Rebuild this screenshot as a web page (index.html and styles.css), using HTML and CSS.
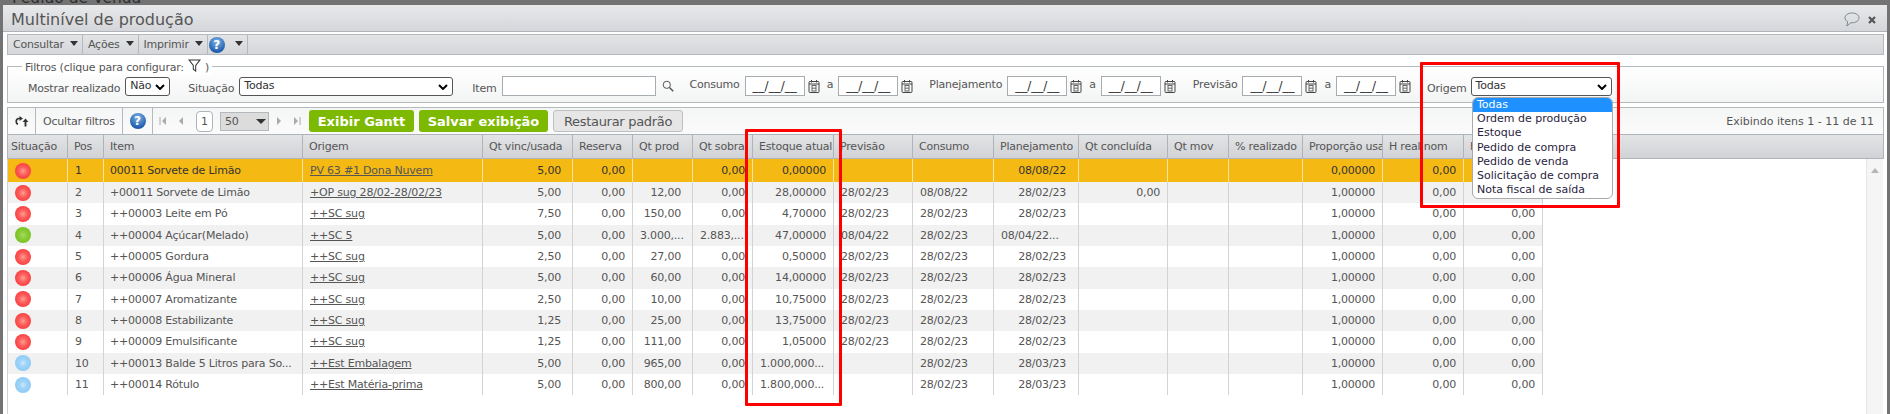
FILE: index.html
```html
<!DOCTYPE html>
<html lang="pt-BR">
<head>
<meta charset="utf-8">
<title>Multinível de produção</title>
<link rel="stylesheet" href="styles.css">
</head>
<body>
<div class="backdrop-title">Pedido de Venda</div>
<main class="window">
  <header class="titlebar">
    <h1 class="title">Multinível de produção</h1>
    <div class="title-icons">
      <svg class="ico-chat" viewBox="0 0 16 15"><path d="M8 1C4 1 1 3 1 5.800c0 1.700 1 3 2.700 3.800L2.800 14l4-3.200H8c4 0 7-2.200 7-5S12 1 8 1z" fill="none" stroke="#7d8a90" stroke-width="1"/></svg>
      <svg class="ico-x" viewBox="0 0 8 8"><path d="M1 1l6 6M7 1L1 7" stroke="#555" stroke-width="2.200" fill="none"/></svg>
    </div>
  </header>
  <nav class="menubar">
    <div class="menu-item">Consultar<i class="caret"></i></div>
    <div class="menu-item">Ações<i class="caret"></i></div>
    <div class="menu-item">Imprimir<i class="caret"></i></div>
    <div class="menu-item menu-help"><span class="help">?</span><i class="caret"></i></div>
  </nav>
  <section class="filters">
    <div class="filters-legend">Filtros (clique para configurar:
      <svg class="ico-funnel" viewBox="0 0 14 14"><path d="M1 1h12L8.300 7v6L5.700 11V7z" fill="#fff" stroke="#333" stroke-width="1.100"/></svg>)
    </div>
    <div class="filter-row">
      <label class="lb low lb-real">Mostrar realizado</label>
      <div class="sel sel-nao">Não<svg class="chev" viewBox="0 0 10 6"><path d="M1 1l4 4 4-4" fill="none" stroke="#000" stroke-width="2"/></svg></div>
      <label class="lb low lb-sit">Situação</label>
      <div class="sel sel-sit">Todas<svg class="chev" viewBox="0 0 10 6"><path d="M1 1l4 4 4-4" fill="none" stroke="#000" stroke-width="2"/></svg></div>
      <label class="lb low lb-item">Item</label>
      <div class="inp inp-item"></div>
      <svg class="ico-search" viewBox="0 0 12 12"><circle cx="4.800" cy="4.800" r="3.600" fill="none" stroke="#555" stroke-width="1"/><path d="M7.500 7.500l3.700 3.700" stroke="#555" stroke-width="1.500"/></svg>
      <label class="lb up lb-cons">Consumo</label>
      <div class="inp date">__/__/__</div>
      <svg class="ico-cal" viewBox="0 0 12 14"><use href="#cal"/></svg>
      <span class="lb up a">a</span>
      <div class="inp date">__/__/__</div>
      <svg class="ico-cal" viewBox="0 0 12 14"><use href="#cal"/></svg>
      <label class="lb up lb-plan">Planejamento</label>
      <div class="inp date">__/__/__</div>
      <svg class="ico-cal" viewBox="0 0 12 14"><use href="#cal"/></svg>
      <span class="lb up a">a</span>
      <div class="inp date">__/__/__</div>
      <svg class="ico-cal" viewBox="0 0 12 14"><use href="#cal"/></svg>
      <label class="lb up lb-prev">Previsão</label>
      <div class="inp date">__/__/__</div>
      <svg class="ico-cal" viewBox="0 0 12 14"><use href="#cal"/></svg>
      <span class="lb up a">a</span>
      <div class="inp date">__/__/__</div>
      <svg class="ico-cal" viewBox="0 0 12 14"><use href="#cal"/></svg>
      <label class="lb low lb-orig">Origem</label>
      <div class="sel sel-orig">Todas<svg class="chev" viewBox="0 0 10 6"><path d="M1 1l4 4 4-4" fill="none" stroke="#000" stroke-width="2"/></svg></div>
    </div>
  </section>
  <div class="toolbar">
    <div class="tb-cell tb-refresh"><svg class="ico-refresh" viewBox="0 0 14 11"><path d="M6 2.500H4C2.300 2.500 1.200 3.800 1.200 5.500S2 8 3 8.300" fill="none" stroke="#333" stroke-width="1.700"/><path d="M4.500 0L8 2.500 4.500 5z" fill="#333"/><path d="M10.500 10.500V4.500" stroke="#333" stroke-width="1.900"/><path d="M7.500 6l3-3.500 3 3.500z" fill="#333"/></svg></div>
    <div class="tb-cell tb-hide">Ocultar filtros</div>
    <div class="tb-cell tb-help"><span class="help">?</span></div>
    <div class="pager">
      <svg class="pg" viewBox="0 0 8 10"><path d="M1 1v8" stroke="#aaa"/><path d="M7 1L3 5l4 4z" fill="#aaa"/></svg>
      <svg class="pg pg-gap" viewBox="0 0 8 10"><path d="M6 1L2 5l4 4z" fill="#aaa"/></svg>
      <div class="page-num">1</div>
      <div class="page-size">50<i class="caret dark"></i></div>
      <svg class="pg" viewBox="0 0 8 10"><path d="M2 1l4 4-4 4z" fill="#aaa"/></svg>
      <svg class="pg pg-gap" viewBox="0 0 8 10"><path d="M1 1l4 4-4 4z" fill="#aaa"/><path d="M7 1v8" stroke="#aaa"/></svg>
    </div>
    <button class="btn green b-gantt">Exibir Gantt</button>
    <button class="btn green b-save">Salvar exibição</button>
    <button class="btn gray b-rest">Restaurar padrão</button>
    <div class="count">Exibindo itens 1 - 11 de 11</div>
  </div>
  <section class="grid-wrap">
    <div class="grid head">
      <div>Situação</div><div>Pos</div><div>Item</div><div>Origem</div><div>Qt vinc/usada</div><div>Reserva</div><div>Qt prod</div><div>Qt sobra</div><div>Estoque atual</div><div>Previsão</div><div>Consumo</div><div>Planejamento</div><div>Qt concluída</div><div>Qt mov</div><div>% realizado</div><div>Proporção usada</div><div>H real nom</div><div>H real</div><div class="head-fill"></div>
    </div>
    <div class="grid-body">
      <div class="grid row sel-row"><div><span class="dot dot-r"></span></div><div>1</div><div>00011 Sorvete de Limão</div><div><a class="link">PV 63 #1 Dona Nuvem</a></div><div class="r">5,00</div><div class="r">0,00</div><div class="r"></div><div class="r">0,00</div><div class="r">0,00000</div><div></div><div></div><div class="r">08/08/22</div><div class="r"></div><div></div><div></div><div class="r">0,00000</div><div class="r">0,00</div><div class="r">0,00</div></div>
      <div class="grid row odd"><div><span class="dot dot-r"></span></div><div>2</div><div>+00011 Sorvete de Limão</div><div><a class="link">+OP sug 28/02-28/02/23</a></div><div class="r">5,00</div><div class="r">0,00</div><div class="r">12,00</div><div class="r">0,00</div><div class="r">28,00000</div><div>28/02/23</div><div>08/08/22</div><div class="r">28/02/23</div><div class="r">0,00</div><div></div><div></div><div class="r">1,00000</div><div class="r">0,00</div><div class="r">0,00</div></div>
      <div class="grid row"><div><span class="dot dot-r"></span></div><div>3</div><div>++00003 Leite em Pó</div><div><a class="link">++SC sug</a></div><div class="r">7,50</div><div class="r">0,00</div><div class="r">150,00</div><div class="r">0,00</div><div class="r">4,70000</div><div>28/02/23</div><div>28/02/23</div><div class="r">28/02/23</div><div class="r"></div><div></div><div></div><div class="r">1,00000</div><div class="r">0,00</div><div class="r">0,00</div></div>
      <div class="grid row odd"><div><span class="dot dot-g"></span></div><div>4</div><div>++00004 Açúcar(Melado)</div><div><a class="link">++SC 5</a></div><div class="r">5,00</div><div class="r">0,00</div><div>3.000,...</div><div>2.883,...</div><div class="r">47,00000</div><div>08/04/22</div><div>28/02/23</div><div>08/04/22...</div><div class="r"></div><div></div><div></div><div class="r">1,00000</div><div class="r">0,00</div><div class="r">0,00</div></div>
      <div class="grid row"><div><span class="dot dot-r"></span></div><div>5</div><div>++00005 Gordura</div><div><a class="link">++SC sug</a></div><div class="r">2,50</div><div class="r">0,00</div><div class="r">27,00</div><div class="r">0,00</div><div class="r">0,50000</div><div>28/02/23</div><div>28/02/23</div><div class="r">28/02/23</div><div class="r"></div><div></div><div></div><div class="r">1,00000</div><div class="r">0,00</div><div class="r">0,00</div></div>
      <div class="grid row odd"><div><span class="dot dot-r"></span></div><div>6</div><div>++00006 Água Mineral</div><div><a class="link">++SC sug</a></div><div class="r">5,00</div><div class="r">0,00</div><div class="r">60,00</div><div class="r">0,00</div><div class="r">14,00000</div><div>28/02/23</div><div>28/02/23</div><div class="r">28/02/23</div><div class="r"></div><div></div><div></div><div class="r">1,00000</div><div class="r">0,00</div><div class="r">0,00</div></div>
      <div class="grid row"><div><span class="dot dot-r"></span></div><div>7</div><div>++00007 Aromatizante</div><div><a class="link">++SC sug</a></div><div class="r">2,50</div><div class="r">0,00</div><div class="r">10,00</div><div class="r">0,00</div><div class="r">10,75000</div><div>28/02/23</div><div>28/02/23</div><div class="r">28/02/23</div><div class="r"></div><div></div><div></div><div class="r">1,00000</div><div class="r">0,00</div><div class="r">0,00</div></div>
      <div class="grid row odd"><div><span class="dot dot-r"></span></div><div>8</div><div>++00008 Estabilizante</div><div><a class="link">++SC sug</a></div><div class="r">1,25</div><div class="r">0,00</div><div class="r">25,00</div><div class="r">0,00</div><div class="r">13,75000</div><div>28/02/23</div><div>28/02/23</div><div class="r">28/02/23</div><div class="r"></div><div></div><div></div><div class="r">1,00000</div><div class="r">0,00</div><div class="r">0,00</div></div>
      <div class="grid row"><div><span class="dot dot-r"></span></div><div>9</div><div>++00009 Emulsificante</div><div><a class="link">++SC sug</a></div><div class="r">1,25</div><div class="r">0,00</div><div class="r">111,00</div><div class="r">0,00</div><div class="r">1,05000</div><div>28/02/23</div><div>28/02/23</div><div class="r">28/02/23</div><div class="r"></div><div></div><div></div><div class="r">1,00000</div><div class="r">0,00</div><div class="r">0,00</div></div>
      <div class="grid row odd"><div><span class="dot dot-b"></span></div><div>10</div><div>++00013 Balde 5 Litros para So...</div><div><a class="link">++Est Embalagem</a></div><div class="r">5,00</div><div class="r">0,00</div><div class="r">965,00</div><div class="r">0,00</div><div>1.000,000...</div><div></div><div>28/02/23</div><div class="r">28/03/23</div><div class="r"></div><div></div><div></div><div class="r">1,00000</div><div class="r">0,00</div><div class="r">0,00</div></div>
      <div class="grid row"><div><span class="dot dot-b"></span></div><div>11</div><div>++00014 Rótulo</div><div><a class="link">++Est Matéria-prima</a></div><div class="r">5,00</div><div class="r">0,00</div><div class="r">800,00</div><div class="r">0,00</div><div>1.800,000...</div><div></div><div>28/02/23</div><div class="r">28/03/23</div><div class="r"></div><div></div><div></div><div class="r">1,00000</div><div class="r">0,00</div><div class="r">0,00</div></div>
    </div>
    <div class="scrollbar"><svg class="sb-up" viewBox="0 0 10 6"><path d="M5 0l5 6H0z" fill="#b5b5b5"/></svg></div>
  </section>
  <div class="box box-stock"></div>
  <div class="box box-orig"></div>
  <ul class="droplist">
    <li class="on">Todas</li><li>Ordem de produção</li><li>Estoque</li><li>Pedido de compra</li><li>Pedido de venda</li><li>Solicitação de compra</li><li>Nota fiscal de saída</li>
  </ul>
</main>
<svg class="defs" width="0" height="0"><defs><g id="cal"><rect x="1" y="2.500" width="10" height="11" rx="1" fill="none" stroke="#444"/><path d="M1 5h10M3.500 1v2.500M8.500 1v2.500" stroke="#444"/><rect x="4" y="6.500" width="4" height="5.500" fill="none" stroke="#666" stroke-width="1"/><path d="M4 9.200h4" stroke="#666"/></g></defs></svg>
</body>
</html>
```
FILE: styles.css
```css
* { box-sizing: border-box; }
html, body { margin: 0; height: 414px; overflow: hidden; }
body { background: #737373; font-family: "DejaVu Sans", sans-serif; font-size: 11px; letter-spacing: -0.2px; color: #555; position: relative; }
.defs { position: absolute; }
.backdrop-title { height: 7px; transform: translateY(-2px); overflow: hidden; font-size: 15.5px; letter-spacing: 0; line-height: 0; padding-left: 12px; color: #2f2f2f; }
.window { position: absolute; left: 3px; top: 5px; width: 1884px; height: 409px; background: #fff; display: flex; flex-direction: column; padding: 0 3px 0 4px; border-radius: 3px 3px 0 0; }
.titlebar { margin: 0 -3px 0 -4px; height: 27px; background: linear-gradient(#e8e9eb, #d4d6d9); border-bottom: 1px solid #aeb4b9; display: flex; align-items: center; justify-content: space-between; padding: 3px 11px 0 8px; flex: none; }
.title { margin: 0; font-weight: 400; font-size: 16px; letter-spacing: 0; color: #555; }
.title-icons { display: flex; align-items: center; gap: 8px; }
.ico-chat { width: 16px; height: 15px; }
.ico-x { width: 8px; height: 8px; }
.menubar { margin-top: 2px; height: 21px; flex: none; display: flex; background: linear-gradient(#e3e4e6, #d4d6d9); border: 1px solid #b4b9bd; }
.menu-item { display: flex; align-items: center; padding: 0 4px 0 5px; gap: 6px; border-right: 1px solid #b4b9bd; height: 100%; }
.menu-help { padding: 0 4px 0 1px; gap: 10px; }
.caret { width: 0; height: 0; border-left: 4px solid transparent; border-right: 4px solid transparent; border-top: 5px solid #333; margin-top: -3px; }
.caret.dark { margin: 0 0 0 auto; border-left-width: 5px; border-right-width: 5px; }
.help { width: 16px; height: 16px; border-radius: 50%; background: radial-gradient(circle at 50% 30%, #7fb4e8, #1d59ab 75%); color: #fff; font-weight: 700; font-size: 12px; letter-spacing: 0; display: inline-flex; align-items: center; justify-content: center; }
.filters { margin: 11px 0 0; height: 37px; flex: none; border: 1px solid #b4b9bd; background: linear-gradient(#fff, #f3f4f4); position: relative; }
.filters-legend { position: absolute; top: -7px; left: 14px; background: #fff; padding: 0 3px; display: flex; align-items: center; gap: 4px; height: 15px; white-space: nowrap; }
.ico-funnel { width: 13px; height: 13px; margin-top: -4px; }
.filter-row { display: flex; align-items: center; height: 100%; padding-top: 3px; }
.lb { flex: none; }
.low { margin-top: 4px; }
.up { margin-top: -4px; }
.lb-real { margin-left: 20px; }
.sel { position: relative; height: 19px; border: 1px solid #555; border-radius: 3px; background: #fff; color: #333; padding: 0 4px; flex: none; line-height: 16px; }
.chev { position: absolute; right: 4px; top: 6px; width: 10px; height: 6px; }
.sel-nao { width: 45px; margin-left: 5px; }
.lb-sit { margin-left: 18px; }
.sel-sit { width: 214px; margin-left: 5px; }
.lb-item { margin-left: 19px; }
.inp { height: 20px; border: 1px solid #a7acb0; background: #fff; flex: none; }
.inp-item { width: 154px; margin-left: 5px; }
.ico-search { width: 12px; height: 12px; margin-left: 6px; flex: none; }
.lb-cons { margin-left: 16px; }
.date { width: 60px; margin-left: 5px; color: #333; font-size: 12px; letter-spacing: 0; line-height: 19px; text-align: center; overflow: hidden; }
.ico-cal { width: 12px; height: 14px; margin-left: 3px; flex: none; }
.a { margin-left: 7px; }
.lb-plan { margin-left: 16px; }
.lb-prev { margin-left: 17px; }
.lb-orig { margin-left: 16px; }
.sel-orig { width: 141px; margin-left: 4px; }
.toolbar { margin-top: 4px; height: 27px; flex: none; border: 1px solid #b4b9bd; border-bottom: 0; background: linear-gradient(#f4f5f5, #fbfbfb); display: flex; align-items: center; }
.tb-cell { height: 100%; display: flex; align-items: center; border-right: 1px solid #b4b9bd; }
.tb-refresh { width: 28px; justify-content: center; }
.ico-refresh { width: 14px; height: 11px; }
.tb-hide { width: 87px; padding-left: 7px; }
.tb-help { width: 30px; justify-content: center; }
.pager { display: flex; align-items: center; padding-left: 6px; }
.pg { width: 8px; height: 10px; }
.pg-gap { margin-left: 10px; }
.page-num { width: 17px; height: 21px; margin-left: 11px; border: 1px solid #aeb4b9; border-radius: 4px; background: #fff; text-align: center; line-height: 20px; }
.page-size { width: 49px; height: 19px; margin: 0 6px 0 7px; border: 1px solid #b4b9bd; background: #dcdcdc; padding: 0 2px 0 4px; display: flex; align-items: center; }
.btn { height: 22px; border-radius: 3px; font-family: inherit; padding: 0; flex: none; }
.green { background: #7db900; border: 0; color: #fff; font-weight: 700; font-size: 13px; letter-spacing: 0; }
.gray { background: #e6e6e6; border: 1px solid #c0c0c0; color: #555; font-size: 13px; letter-spacing: -0.3px; }
.b-gantt { width: 105px; margin-left: 8px; }
.b-save { width: 129px; margin-left: 5px; }
.b-rest { width: 130px; margin-left: 5px; }
.count { margin-left: auto; padding-right: 9px; letter-spacing: 0; }
.grid-wrap { position: relative; flex: 1; min-height: 0; border-left: 1px solid #cfd2d5; margin-left: 0; }
.grid { display: grid; grid-template-columns: 60px 36px 199px 180px 90px 60px 60px 60px 81px 79px 81px 85px 89px 61px 74px 80px 81px 79px; }
.head { height: 25px; margin-left: -1px; background: linear-gradient(#e3e4e6, #d0d2d5); border: 1px solid #aeb4b9; grid-template-columns: 60px 36px 199px 180px 90px 60px 60px 60px 81px 79px 81px 85px 89px 61px 74px 80px 81px 79px 323px 1fr; }
.head > div { border-right: 1px solid #aeb4b9; padding-left: 6px; line-height: 24px; white-space: nowrap; overflow: hidden; }
.head > div:first-child { padding-left: 3px; }
.head-fill { border-right: 0 !important; }
.grid-body { width: 1535px; }
.row { height: 21.330px; background: #fff; }
.row.odd { background: #f1f1f1; }
.row.sel-row { height: 23px; background: #f5b914; color: #333; }
.row > div { border-right: 1px solid #d3d3d3; padding: 0 7px; white-space: nowrap; overflow: hidden; display: flex; align-items: center; }
.row.sel-row > div { border-right-color: #fbe3a0; }
.row > .r { justify-content: flex-end; }
.row > div:nth-child(3) { padding-left: 6px; }
.row > div:nth-child(5), .row > div:nth-child(7) { padding-right: 11px; }
.row > div:nth-child(12) { padding-right: 12px; }
.link { text-decoration: underline; color: #555; }
.dot { width: 16px; height: 16px; border-radius: 50%; flex: none; }
.dot-r { background: radial-gradient(circle, #ffa08c 0, #fb6060 35%, #fb3c3c 75%); }
.dot-g { background: radial-gradient(circle, #a6da60 0, #8ccc38 35%, #74c21f 75%); }
.dot-b { background: radial-gradient(circle, #cfe9fb 0, #a0d4f8 30%, #8ccaf6 75%); }
.scrollbar { position: absolute; right: 1px; top: 25px; bottom: 0; width: 17px; border-left: 1px solid #e6e6e6; background: #f5f5f5; }
.sb-up { position: absolute; left: 4px; top: 9px; width: 8px; height: 5px; }
.box { position: absolute; border: 3px solid #ff0000; border-radius: 1px; pointer-events: none; z-index: 3; }
.box-stock { left: 742px; top: 124px; width: 97px; height: 277px; }
.box-orig { left: 1417px; top: 57px; width: 200px; height: 146px; }
.droplist { position: absolute; left: 1469px; top: 92px; width: 141px; height: 102px; margin: 0; padding: 0; list-style: none; background: #fff; border: 1px solid #aaa; border-radius: 6px; z-index: 2; color: #2a2440; letter-spacing: 0; overflow: hidden; }
.droplist li { height: 14.200px; line-height: 14px; padding-left: 4px; white-space: nowrap; }
.droplist li.on { background: #1e90ff; color: #fff; }
```
